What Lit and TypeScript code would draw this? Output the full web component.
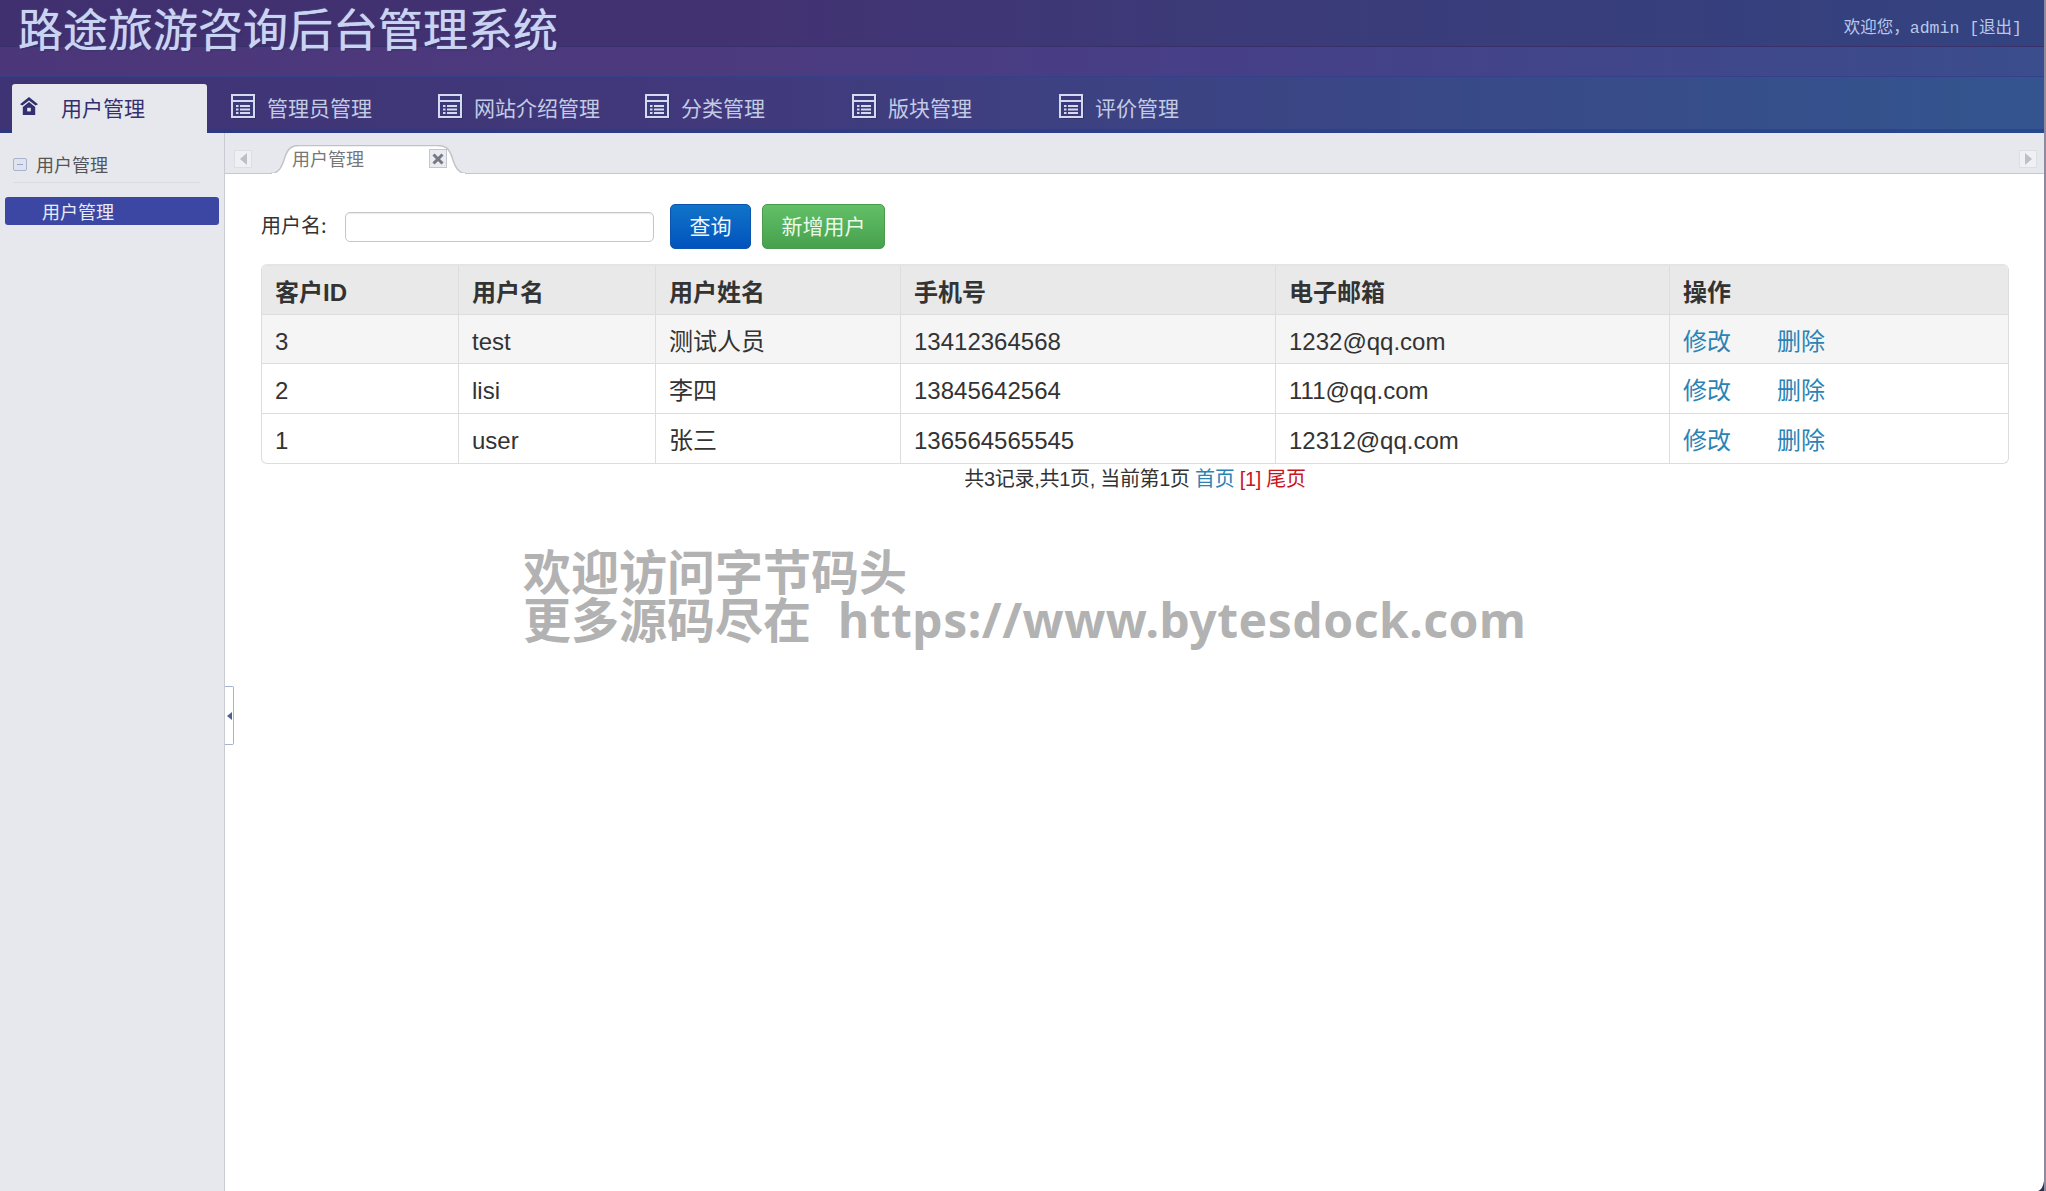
import { LitElement, html, css, svg } from "lit";
import { customElement } from "lit/decorators.js";

const homeIcon = svg`<svg class="home" viewBox="0 0 18 18" width="18" height="18">
  <path d="M9 0 L18 7.2 L15.6 8.6 L9 3.4 L2.4 8.6 L0 7.2 Z" fill="#343070"/>
  <path d="M9 5 L15.2 10 V18 H2.8 V10 Z" fill="#343070"/>
  <rect x="7.2" y="10.8" width="3.6" height="3.6" fill="#e6e8ef"/>
</svg>`;

const listIcon = svg`<svg class="list" viewBox="0 0 25 25" width="25" height="25">
  <rect x="2" y="2" width="23" height="23" fill="#27285a" opacity=".5"/>
  <rect x="1" y="1" width="22" height="22" fill="#3d3a7c" stroke="#d5daf0" stroke-width="2"/>
  <rect x="1" y="6" width="22" height="2" fill="#d5daf0"/>
  <rect x="5" y="11" width="2.5" height="2" fill="#d5daf0"/>
  <rect x="9" y="11" width="10" height="2" fill="#d5daf0"/>
  <rect x="5" y="14.5" width="2.5" height="2" fill="#d5daf0"/>
  <rect x="9" y="14.5" width="10" height="2" fill="#d5daf0"/>
  <rect x="5" y="18" width="2.5" height="2" fill="#d5daf0"/>
  <rect x="9" y="18" width="10" height="2" fill="#d5daf0"/>
</svg>`;

const navItems = ["管理员管理", "网站介绍管理", "分类管理", "版块管理", "评价管理"];
const rows = [
  { id: "3", user: "test", name: "测试人员", phone: "13412364568", mail: "1232@qq.com" },
  { id: "2", user: "lisi", name: "李四", phone: "13845642564", mail: "111@qq.com" },
  { id: "1", user: "user", name: "张三", phone: "136564565545", mail: "12312@qq.com" },
];

@customElement("app-root")
export class AppRoot extends LitElement {
  static styles = css`
    :host {
      display: flex;
      flex-direction: column;
      height: 100vh;
      width: 100%;
      box-sizing: border-box;
      border-right: 2px solid #8f8aa0;
      overflow: hidden;
      position: relative;
      font-family: "Liberation Sans", "Noto Sans CJK SC", sans-serif;
      color: #333;
      background: #fff;
    }
    .top {
      height: 47px;
      box-sizing: border-box;
      border-bottom: 1px solid #37306a;
      background: linear-gradient(90deg, #41306f 0%, #433272 35%, #3c3a78 60%, #334380 100%);
      display: flex;
      justify-content: space-between;
      flex: none;
    }
    .title {
      position: relative;
      z-index: 1;
      font-family: "Noto Sans CJK SC", sans-serif;
      font-size: 45px;
      line-height: 56px;
      height: 56px;
      margin-left: 18px;
      color: #c9d4f2;
      text-shadow: 0 0 1px #c9d4f2, 1px 1px 1px #2e2660;
      white-space: nowrap;
    }
    .welcome {
      font-family: "Liberation Mono", "Noto Sans CJK SC", monospace;
      font-size: 16.5px;
      line-height: 20px;
      color: #b9c8ea;
      margin: 19px 22px 0 0;
      white-space: nowrap;
    }
    .band {
      height: 30px;
      flex: none;
      box-sizing: border-box;
      border-bottom: 1px solid #36408a;
      background: linear-gradient(90deg, #4b3679 0%, #4d3a7e 35%, #463f88 60%, #3a4d8c 100%);
    }
    nav {
      height: 56px;
      flex: none;
      box-sizing: border-box;
      display: flex;
      gap: 12px;
      padding-left: 12px;
      background:
        linear-gradient(180deg, transparent 0, transparent 52px, rgba(30, 60, 140, .55) 52px),
        linear-gradient(90deg, #3e3374 0%, #41397c 35%, #3b4484 60%, #33558f 100%);
    }
    .tab {
      width: 195px;
      height: 56px;
      box-sizing: border-box;
      padding: 11px 0 0 12px;
      display: flex;
      align-items: flex-start;
      gap: 11px;
      font-family: "Noto Sans CJK SC", sans-serif;
      font-size: 21px;
      line-height: 38px;
      color: #c3cbe4;
    }
    .tab .list { margin-top: 6px; flex: none; }
    .tab.on {
      background: #e6e8ee;
      border-radius: 3px 3px 0 0;
      margin-top: 7px;
      height: 49px;
      padding: 4px 0 0 8px;
      gap: 23px;
      color: #343070;
    }
    .tab.on .home { margin-top: 9px; flex: none; }
    .body {
      flex: 1;
      display: flex;
      min-height: 0;
    }
    aside {
      width: 225px;
      flex: none;
      box-sizing: border-box;
      background: #e6e8ee;
      border-right: 1px solid #c9cbd2;
      padding-top: 20px;
      font-family: "Noto Sans CJK SC", sans-serif;
    }
    .group {
      display: flex;
      align-items: center;
      gap: 9px;
      margin: 0 24px 0 13px;
      padding-bottom: 6px;
      height: 23px;
      font-size: 18px;
      line-height: 23px;
      color: #555;
      border-bottom: 1px solid #dadce3;
    }
    .box {
      width: 14px;
      height: 13px;
      box-sizing: border-box;
      border: 1px solid #a9b3cf;
      border-radius: 2px;
      background: #dfe3ee;
      display: flex;
      align-items: center;
      justify-content: center;
    }
    .box::after {
      content: "";
      width: 6px;
      height: 1px;
      background: #9aa6c4;
    }
    .item {
      margin: 14px 5px 0 5px;
      height: 28px;
      line-height: 28px;
      padding-left: 37px;
      font-size: 18px;
      color: #e8ebfa;
      background: #3c47a3;
      border-radius: 3px;
    }
    main {
      flex: 1;
      min-width: 0;
      display: flex;
      flex-direction: column;
    }
    .tabs {
      height: 41px;
      flex: none;
      box-sizing: border-box;
      background: #e6e8ee;
      border-bottom: 1px solid #c6c8cc;
      display: flex;
      align-items: flex-start;
      padding-left: 9px;
      position: relative;
    }
    .arrow {
      width: 18px;
      height: 18px;
      margin-top: 17px;
      box-sizing: border-box;
      border: 1px solid #dcdee4;
      background: #eff0f3;
      display: flex;
      align-items: center;
      justify-content: center;
      flex: none;
    }
    .arrow i {
      width: 0;
      height: 0;
      border-style: solid;
      border-width: 6px 7px 6px 0;
      border-color: transparent #bcbfc9 transparent transparent;
    }
    .arrow.r { margin-left: auto; margin-right: 7px; }
    .arrow.r i { border-width: 6px 0 6px 7px; border-color: transparent transparent transparent #bcbfc9; }
    .sheet {
      position: relative;
      margin: 12px 0 -1px 19px;
      width: 195px;
      height: 29px;
      flex: none;
      display: flex;
      align-items: center;
      padding-left: 21px;
      box-sizing: border-box;
      font-family: "Noto Sans CJK SC", sans-serif;
      font-size: 18px;
      color: #777;
    }
    .sheet svg.shape { position: absolute; left: 0; top: 0; }
    .sheet span { position: relative; top: -2px; }
    .close {
      position: absolute;
      left: 158px;
      top: 4px;
      width: 18px;
      height: 19px;
      box-sizing: border-box;
      background: #e9ebf0;
      border: 1px solid #c3c6ce;
      display: flex;
      align-items: center;
      justify-content: center;
    }
    .content {
      flex: 1;
      padding: 30px 35px 0 36px;
    }
    .form {
      display: flex;
      align-items: flex-start;
      height: 45px;
    }
    .form label {
      font-family: "Noto Sans CJK SC", sans-serif;
      font-size: 20px;
      line-height: 42px;
      width: 84px;
      flex: none;
    }
    .form .input {
      width: 309px;
      height: 30px;
      margin-top: 8px;
      box-sizing: border-box;
      border: 1px solid #c6c6c6;
      border-radius: 5px;
      background: #fff;
      box-shadow: inset 0 1px 1px rgba(0, 0, 0, .08);
    }
    .btn {
      height: 45px;
      box-sizing: border-box;
      border-radius: 5px;
      font-family: "Noto Sans CJK SC", sans-serif;
      font-size: 21px;
      line-height: 41px;
      text-align: center;
      color: #eef7ff;
      flex: none;
    }
    .btn.q {
      width: 81px;
      margin-left: 16px;
      background: linear-gradient(180deg, #0f74c9, #0253bd);
      border: 1px solid #0b55ae;
    }
    .btn.a {
      width: 123px;
      margin-left: 11px;
      color: #eafbe8;
      background: linear-gradient(180deg, #62c067, #47a04e);
      border: 1px solid #4a9a50;
    }
    .grid {
      margin-top: 15px;
      width: 1748px;
      box-sizing: border-box;
      border: 1px solid #ddd;
      border-top: 2px solid #e4e4e4;
      border-radius: 6px;
      overflow: hidden;
      display: grid;
      grid-template-columns: 196px 197px 245px 375px 394px 1fr;
      grid-template-rows: 48px 49px 50px 50px;
      font-size: 24px;
      line-height: 54px;
    }
    .cell {
      box-sizing: border-box;
      padding-left: 13px;
      border-left: 1px solid #ddd;
      border-top: 1px solid #ddd;
      white-space: nowrap;
      overflow: hidden;
    }
    .cell.first { border-left: 0; }
    .cell.h {
      background: #e9e9e9;
      font-weight: 700;
      border-top: 0;
    }
    .cell.alt { background: #f5f5f5; }
    .cell a { color: #2b83b5; text-decoration: none; }
    .cell a + a { margin-left: 46px; }
    .pager {
      width: 1748px;
      text-align: center;
      font-size: 20px;
      line-height: 30px;
      letter-spacing: -0.3px;
    }
    .pager a { color: #2b83b5; text-decoration: none; }
    .pager b { font-weight: 400; color: #c8141c; }
    .mark {
      position: absolute;
      left: 523px;
      top: 548px;
      font-family: "Noto Sans", "Noto Sans CJK SC", sans-serif;
      font-weight: 700;
      font-size: 48px;
      line-height: 48px;
      color: #b2b2b2;
      white-space: pre;
      pointer-events: none;
    }
    .mark span { letter-spacing: 0.5px; margin-left: 2px; }
    .handle {
      position: absolute;
      left: 225px;
      top: 686px;
      width: 9px;
      height: 59px;
      box-sizing: border-box;
      background: #fff;
      border: 1px solid #a4b4d0;
      border-left: 0;
      border-radius: 0 2px 2px 0;
      display: flex;
      align-items: center;
      justify-content: center;
    }
    .handle i {
      width: 0;
      height: 0;
      border-style: solid;
      border-width: 4px 5px 4px 0;
      border-color: transparent #4d5f94 transparent transparent;
    }
    .corner {
      position: absolute;
      right: 0;
      bottom: 0;
    }
  `;

  render() {
    const heads = ["客户ID", "用户名", "用户姓名", "手机号", "电子邮箱", "操作"];
    return html`
      <div class="top">
        <div class="title">路途旅游咨询后台管理系统</div>
        <div class="welcome">欢迎您，admin [退出]</div>
      </div>
      <div class="band"></div>
      <nav>
        <div class="tab on">${homeIcon}<span>用户管理</span></div>
        ${navItems.map((n) => html`<div class="tab">${listIcon}<span>${n}</span></div>`)}
      </nav>
      <div class="body">
        <aside>
          <div class="group"><span class="box"></span><span>用户管理</span></div>
          <div class="item">用户管理</div>
        </aside>
        <main>
          <div class="tabs">
            <div class="arrow"><i></i></div>
            <div class="sheet">
              <svg class="shape" width="195" height="29" viewBox="0 0 195 29">
                <path d="M0 28.5 C8 28 11 22 14 12 C17 3 21 .5 28 .5 H166 C174 .5 178 3 181 12 C184 22 187 28 195 28.5" fill="#fff" stroke="#c0c2c8" stroke-width="1.4"/>
                <rect x="1" y="28" width="193" height="1" fill="#fff"/>
              </svg>
              <span>用户管理</span>
              <div class="close">
                <svg width="12" height="12" viewBox="0 0 12 12"><path d="M1.5 1.5 L10.5 10.5 M10.5 1.5 L1.5 10.5" stroke="#767984" stroke-width="3"/></svg>
              </div>
            </div>
            <div class="arrow r"><i></i></div>
          </div>
          <div class="content">
            <div class="form">
              <label>用户名:</label>
              <div class="input"></div>
              <div class="btn q">查询</div>
              <div class="btn a">新增用户</div>
            </div>
            <div class="grid">
              ${heads.map((h, i) => html`<div class="cell h ${i === 0 ? "first" : ""}">${h}</div>`)}
              ${rows.map((r, i) => {
                const alt = i === 0 ? "alt" : "";
                return html`
                  <div class="cell first ${alt}">${r.id}</div>
                  <div class="cell ${alt}">${r.user}</div>
                  <div class="cell ${alt}">${r.name}</div>
                  <div class="cell ${alt}">${r.phone}</div>
                  <div class="cell ${alt}">${r.mail}</div>
                  <div class="cell ${alt}"><a>修改</a><a>删除</a></div>
                `;
              })}
            </div>
            <div class="pager">共3记录,共1页, 当前第1页 <a>首页</a> <b>[1] 尾页</b></div>
          </div>
        </main>
      </div>
      <div class="handle"><i></i></div>
      <div class="mark">欢迎访问字节码头
更多源码尽在  <span>https://www.bytesdock.com</span></div>
      <svg class="corner" width="6" height="10" viewBox="0 0 6 10"><path d="M6 0 V10 H0 C3 9 5 6 6 0 Z" fill="#2c3150"/></svg>
    `;
  }
}
